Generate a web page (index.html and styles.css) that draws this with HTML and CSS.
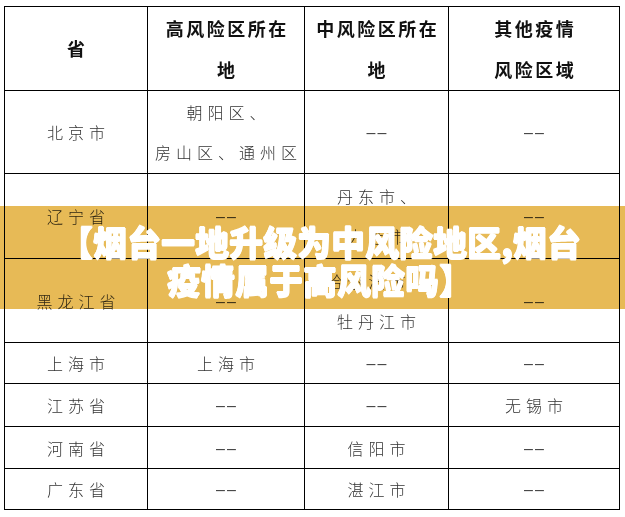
FILE: index.html
```html
<!DOCTYPE html>
<html lang="zh-CN">
<head>
<meta charset="utf-8">
<title>烟台一地升级为中风险地区</title>
<link rel="stylesheet" href="styles.css">
</head>
<body>
<div class="page">
  <table class="risk">
    <colgroup>
      <col class="c1"><col class="c2"><col class="c3"><col class="c4">
    </colgroup>
    <tr class="head">
      <th><span>省</span></th>
      <th><span>高风险区所在<br>地</span></th>
      <th><span>中风险区所在<br>地</span></th>
      <th><span>其他疫情<br>风险区域</span></th>
    </tr>
    <tr class="tall r1">
      <td><span>北京市</span></td>
      <td><span>朝阳区、<br>房山区、通州区</span></td>
      <td><span class="dash">––</span></td>
      <td><span class="dash">––</span></td>
    </tr>
    <tr class="tall r2">
      <td><span>辽宁省</span></td>
      <td><span class="dash">––</span></td>
      <td><span>丹东市、<br>大连市</span></td>
      <td><span class="dash">––</span></td>
    </tr>
    <tr class="tall r3">
      <td><span>黑龙江省</span></td>
      <td><span class="dash">––</span></td>
      <td><span>哈尔滨市、<br>牡丹江市</span></td>
      <td><span class="dash">––</span></td>
    </tr>
    <tr class="short s1">
      <td><span>上海市</span></td>
      <td><span>上海市</span></td>
      <td><span class="dash">––</span></td>
      <td><span class="dash">––</span></td>
    </tr>
    <tr class="short s2">
      <td><span>江苏省</span></td>
      <td><span class="dash">––</span></td>
      <td><span class="dash">––</span></td>
      <td><span>无锡市</span></td>
    </tr>
    <tr class="short s3">
      <td><span>河南省</span></td>
      <td><span class="dash">––</span></td>
      <td><span>信阳市</span></td>
      <td><span class="dash">––</span></td>
    </tr>
    <tr class="short s4">
      <td><span>广东省</span></td>
      <td><span class="dash">––</span></td>
      <td><span>湛江市</span></td>
      <td><span class="dash">––</span></td>
    </tr>
  </table>

  <div class="banner">
    <div class="banner-bg"></div>
    <h1 class="banner-title">【烟台一地升级为中风险地区,烟台<br>疫情属于高风险吗】</h1>
  </div>
</div>
</body>
</html>
```

FILE: styles.css
```css
html, body {
  margin: 0;
  padding: 0;
  background: #ffffff;
}

.page {
  position: relative;
  width: 625px;
  height: 517px;
  padding: 6px 0 0 4px;
  box-sizing: border-box;
  overflow: hidden;
}

.risk {
  border-collapse: collapse;
  table-layout: fixed;
  width: 616px;
}

.c1 { width: 143px; }
.c2 { width: 157px; }
.c3 { width: 144px; }
.c4 { width: 171px; }

.risk th,
.risk td {
  border: 1px solid #000;
  padding: 0;
  text-align: center;
  vertical-align: middle;
}

.risk th {
  font-family: "Noto Sans CJK SC", "Noto Sans", sans-serif;
  font-weight: 700;
  font-size: 18px;
  line-height: 41px;
  letter-spacing: 2.5px;
  color: #111;
}

.risk th span {
  display: inline-block;
  padding-left: 2.5px;
}

.risk td {
  font-family: "Noto Sans CJK SC", "Noto Sans", sans-serif;
  font-weight: 300;
  font-size: 16px;
  line-height: 40px;
  letter-spacing: 5px;
  color: #333333;
}

.risk td span {
  display: inline-block;
  padding-left: 5px;
}

.risk .short td {
  line-height: 36px;
}

.risk td .dash {
  font-family: "Liberation Sans", sans-serif;
  font-weight: 400;
  letter-spacing: 2px;
  padding-left: 2px;
  color: #444;
}

.head { height: 84px; }
.r1 { height: 83px; }
.r2 { height: 85px; }
.r3 { height: 84px; }
.s1 { height: 41px; }
.s2 { height: 43px; }
.s3 { height: 42px; }
.s4 { height: 41px; }

.banner {
  position: absolute;
  left: 0;
  top: 206px;
  width: 625px;
  height: 103px;
  display: flex;
  align-items: center;
  justify-content: center;
  padding: 7px 0 0 15px;
  box-sizing: border-box;
}

.banner-bg {
  position: absolute;
  inset: 0;
  background: #e7ba56;
  mix-blend-mode: multiply;
}

.banner-title {
  position: relative;
  margin: 0;
  font-family: "Noto Sans CJK SC", "Noto Sans", sans-serif;
  font-weight: 900;
  font-size: 34px;
  line-height: 38px;
  color: #ffffff;
  text-shadow: 0.6px 0 0 #fff, -0.6px 0 0 #fff, 0 0.6px 0 #fff, 0 -0.6px 0 #fff;
  text-align: center;
  white-space: nowrap;
}
```
